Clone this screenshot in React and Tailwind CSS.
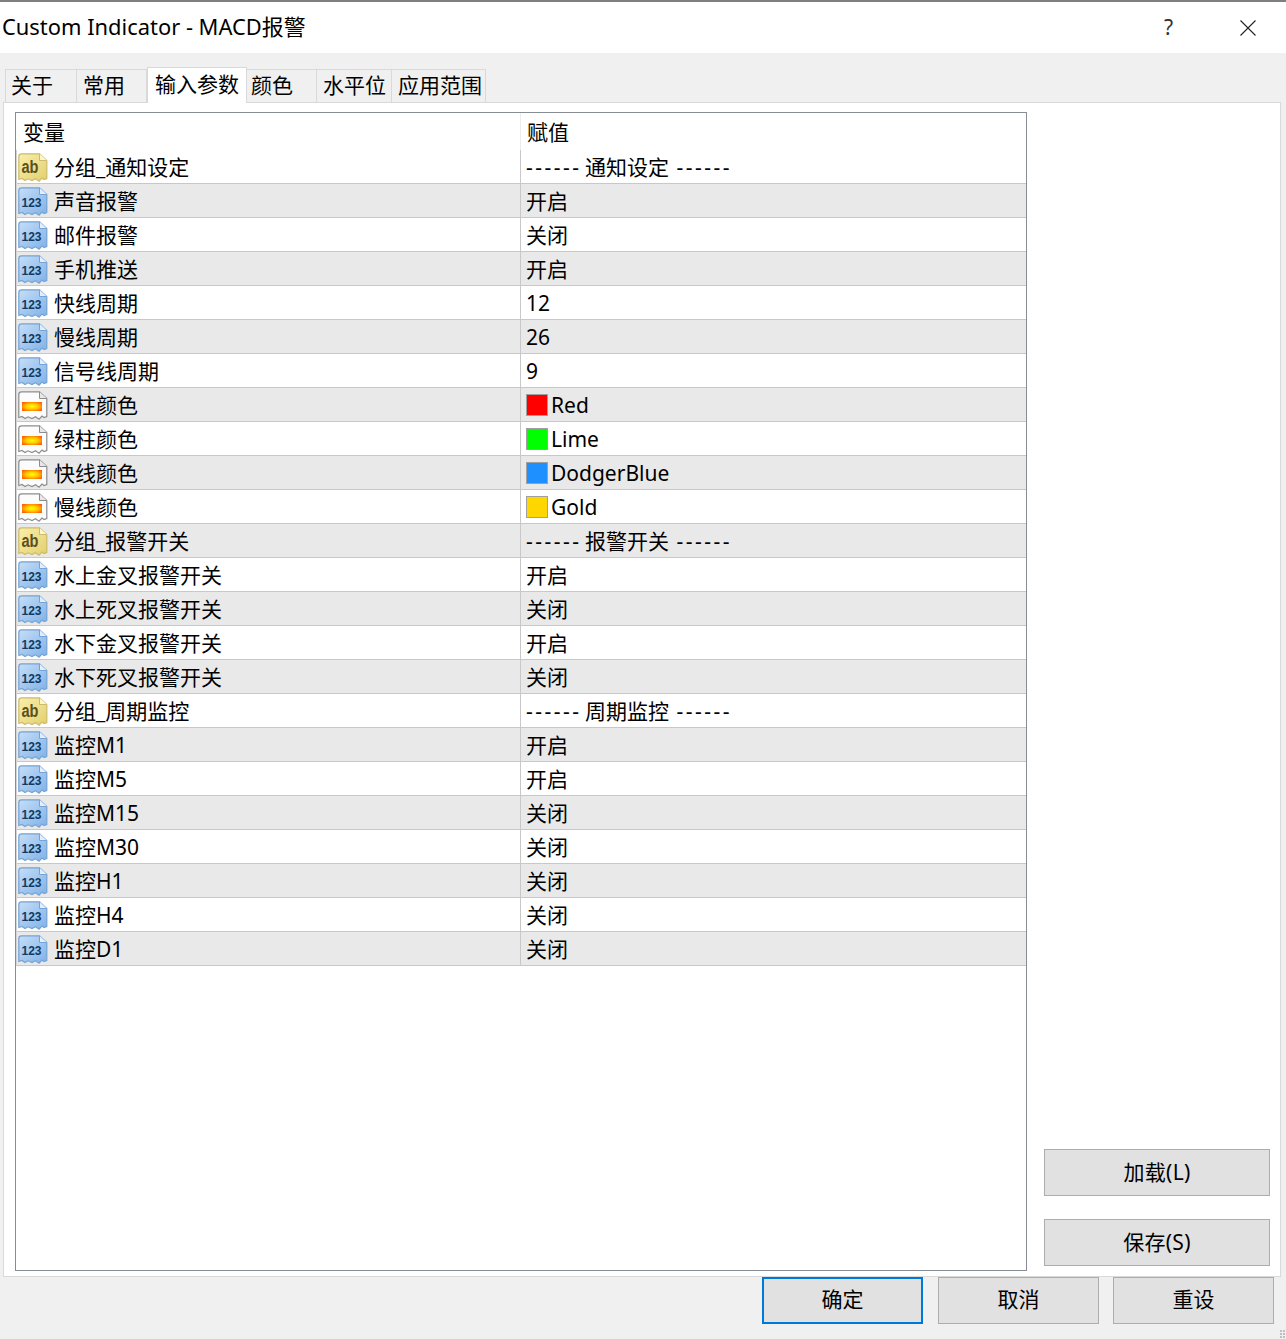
import React from 'react';

const font = { fontFamily: '"Noto Sans", "Noto Sans CJK SC", sans-serif' };

const tabs = [
  { label: '关于', cls: 'w-[72px] border-l pl-[5px]' },
  { label: '常用', cls: 'w-[70px] pl-[6px]' },
  { label: '输入参数', cls: 'w-[100px] border-l pl-[7px]', active: true },
  { label: '颜色', cls: 'w-[70px] pl-[4px]' },
  { label: '水平位', cls: 'w-[75px] pl-[6px]' },
  { label: '应用范围', cls: 'w-[94px] pl-[6px]' },
];

const rows = [
  ['ab', '分组_通知设定', '通知设定', 'group'],
  ['num', '声音报警', '开启'],
  ['num', '邮件报警', '关闭'],
  ['num', '手机推送', '开启'],
  ['num', '快线周期', '12'],
  ['num', '慢线周期', '26'],
  ['num', '信号线周期', '9'],
  ['color', '红柱颜色', 'Red', 'bg-[#ff0000]'],
  ['color', '绿柱颜色', 'Lime', 'bg-[#00ff00]'],
  ['color', '快线颜色', 'DodgerBlue', 'bg-[#1e90ff]'],
  ['color', '慢线颜色', 'Gold', 'bg-[#ffd700]'],
  ['ab', '分组_报警开关', '报警开关', 'group'],
  ['num', '水上金叉报警开关', '开启'],
  ['num', '水上死叉报警开关', '关闭'],
  ['num', '水下金叉报警开关', '开启'],
  ['num', '水下死叉报警开关', '关闭'],
  ['ab', '分组_周期监控', '周期监控', 'group'],
  ['num', '监控M1', '开启'],
  ['num', '监控M5', '开启'],
  ['num', '监控M15', '关闭'],
  ['num', '监控M30', '关闭'],
  ['num', '监控H1', '关闭'],
  ['num', '监控H4', '关闭'],
  ['num', '监控D1', '关闭'],
];

const sheet = 'M0.8 3.5 Q0.8 0.8 3.5 0.8 L21.5 0.8 L28.8 7.5 L28.8 25.5 L26 26.5 L24 25 L21 28.2 L17.5 25.8 L14 27.5 L10 25.8 L7 27.6 L4 25.5 L0.8 26.5 Z';
const fold = 'M21.5 0.8 L21.5 7.5 L28.8 7.5';

// little torn-sheet icons from the MT4 inputs list
const TypeIcon = ({ type }) => {
  if (type === 'color') {
    return (
      <svg width="30" height="30" viewBox="0 0 30 30" className="shrink-0">
        <defs>
          <radialGradient id="heat" cx="50%" cy="50%" r="60%">
            <stop offset="0%" stopColor="#ffff00" />
            <stop offset="50%" stopColor="#ffc800" />
            <stop offset="100%" stopColor="#ff6400" />
          </radialGradient>
        </defs>
        <path d={sheet} fill="#fcfcfc" stroke="#8c8c8c" strokeWidth="1.2" />
        <path d={fold} fill="#e8e8e8" stroke="#8c8c8c" strokeWidth="1" />
        <rect x="4" y="11" width="20" height="9" fill="url(#heat)" />
      </svg>
    );
  }
  const isAb = type === 'ab';
  return (
    <svg width="30" height="30" viewBox="0 0 30 30" className="shrink-0">
      <defs>
        <linearGradient id="blue" x1="0" y1="0" x2="1" y2="1">
          <stop offset="0%" stopColor="#c6def7" />
          <stop offset="100%" stopColor="#80b1e7" />
        </linearGradient>
        <linearGradient id="sand" x1="0" y1="0" x2="1" y2="1">
          <stop offset="0%" stopColor="#f8efab" />
          <stop offset="100%" stopColor="#e3cf6e" />
        </linearGradient>
      </defs>
      <path d={sheet} fill={isAb ? 'url(#sand)' : 'url(#blue)'} stroke={isAb ? '#cdbb6a' : '#74a4d6'} strokeWidth="1.2" />
      <path d={fold} fill={isAb ? '#fbf6cf' : '#e4effb'} stroke={isAb ? '#cdbb6a' : '#74a4d6'} strokeWidth="1" />
      <text
        x={isAb ? 12 : 13.5}
        y="20"
        textAnchor="middle"
        textLength={isAb ? 17 : 20}
        lengthAdjust="spacingAndGlyphs"
        fontFamily="Liberation Sans, sans-serif"
        fontWeight="700"
        fontSize={isAb ? 18 : 12.5}
        fill={isAb ? '#5a5020' : '#103a64'}
      >
        {isAb ? 'ab' : '123'}
      </text>
    </svg>
  );
};

const Row = ({ row, index }) => {
  const [type, name, value, extra] = row;
  const isGroup = extra === 'group';
  return (
    <div className={`flex h-[34px] border-b border-[#c8c8c8] ${index % 2 ? 'bg-[#e9e9e9]' : 'bg-white'}`}>
      <div className="flex w-[503px] items-center pt-[2px] pl-[1px]">
        <TypeIcon type={type} />
        <span className="ml-[6px] text-[21px]">{name}</span>
      </div>
      <div className="flex flex-1 items-center border-l border-[#c8c8c8] pt-[2px] pl-[5px] text-[21px] whitespace-pre">
        {extra && !isGroup && <span className={`mr-[3px] -mt-[2px] h-[22px] w-[22px] border border-[#a0a0a0] ${extra}`} />}
        {isGroup ? (
          <span>
            <span className="-mr-[2px] tracking-[2.5px]">------</span> {value}{' '}
            <span className="ml-[2px] tracking-[2.5px]">------</span>
          </span>
        ) : (
          <span>{value}</span>
        )}
      </div>
    </div>
  );
};

const Btn = ({ children, focused, className }) => (
  <button
    className={`flex h-[47px] items-center justify-center bg-[#e1e1e1] text-[21px] ${focused ? 'border-2 border-[#0078d7]' : 'border border-[#adadad]'} ${className}`}
  >
    {children}
  </button>
);

export default function App() {
  return (
    <div className="flex h-[1339px] w-[1286px] flex-col overflow-hidden bg-[#f0f0f0] text-black" style={font}>
      <div className="flex h-[53px] items-center border-t-2 border-[#7f7f7f] bg-white">
        <div className="pl-[2px] text-[21.9px]">Custom Indicator - MACD报警</div>
        <div className="ml-auto w-[17px] text-[21px] text-[#333]">?</div>
        <svg width="16" height="16" viewBox="0 0 16 16" className="ml-[59px] mr-[30px]">
          <path d="M0.5 0.5 L15.5 15.5 M15.5 0.5 L0.5 15.5" stroke="#222" strokeWidth="1.1" />
        </svg>
      </div>

      <div className="flex h-[49px] items-end pl-[5px]">
        {tabs.map((t) => (
          <div
            key={t.label}
            className={`${t.cls} border-t border-r border-[#d9d9d9] ${
              t.active
                ? 'z-10 -mb-[1px] flex h-[36px] items-center bg-white pb-[2px]'
                : 'flex h-[33px] items-center bg-[#f0f0f0]'
            } text-[21px]`}
          >
            {t.label}
          </div>
        ))}
      </div>

      <div className="ml-[3px] flex h-[1175px] w-[1278px] border border-[#d9d9d9] bg-white pt-[9px] pb-[5px] pl-[11px] pr-[9px]">
        <div className="h-full w-[1012px] border border-[#888c94] bg-white">
          <div className="flex h-[37px]">
            <div className="flex w-[504px] items-center pt-[2px] pl-[7px] text-[21px]">变量</div>
            <div className="flex flex-1 items-center border-l border-[#ececec] pt-[2px] pl-[6px] text-[21px]">赋值</div>
          </div>
          <div className="border-l border-[#d4d4d4]">
            {rows.map((r, i) => (
              <Row key={r[1]} row={r} index={i} />
            ))}
          </div>
        </div>
        <div className="ml-[17px] flex flex-1 flex-col justify-end gap-[23px] pb-[5px]">
          <Btn className="w-[226px] tracking-[0.3px]">加载(L)</Btn>
          <Btn className="w-[226px] tracking-[0.3px]">保存(S)</Btn>
        </div>
      </div>

      <div className="relative flex flex-1 items-start pl-[762px]">
        <Btn focused className="w-[161px] pb-[2px]">确定</Btn>
        <Btn className="ml-[15px] w-[161px] pb-[2px]">取消</Btn>
        <Btn className="ml-[14px] w-[161px] pb-[2px]">重设</Btn>
        <svg width="6" height="9" viewBox="0 0 6 9" className="absolute right-0 bottom-0">
          <path d="M0 0h2v2H0zM3 0h2v2H3zM0 3h2v2H0zM3 3h2v2H3zM0 6h2v2H0zM3 6h2v2H3z" fill="#bfbfbf" />
        </svg>
      </div>
    </div>
  );
}
